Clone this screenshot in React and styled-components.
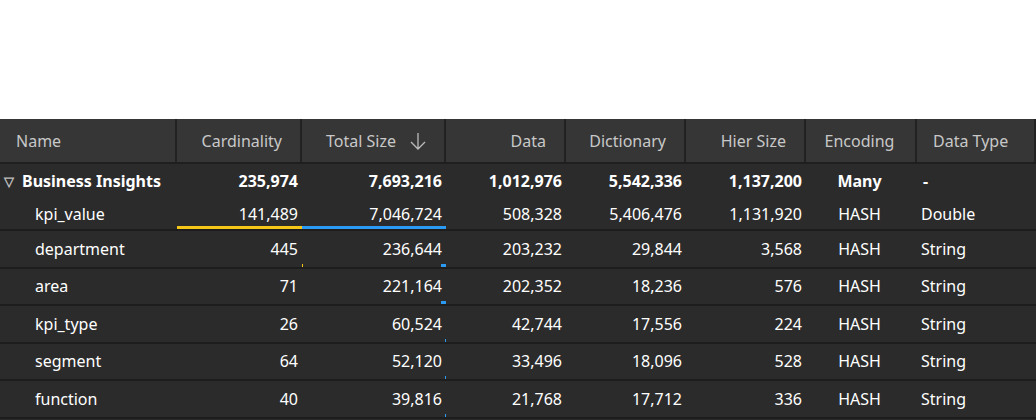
import React from 'react';
import styled, { createGlobalStyle } from 'styled-components';

const Global = createGlobalStyle`
  body { margin: 0; background: #fff; font-family: "Noto Sans", "Open Sans", sans-serif; }
`;

const cols = [
  { key: 'name', label: 'Name', w: 177, align: 'left' },
  { key: 'card', label: 'Cardinality', w: 125, align: 'right', bar: '#f5c518' },
  { key: 'total', label: 'Total Size', w: 144, align: 'right', bar: '#2b9af3', sort: true },
  { key: 'data', label: 'Data', w: 120, align: 'right' },
  { key: 'dict', label: 'Dictionary', w: 120, align: 'right' },
  { key: 'hier', label: 'Hier Size', w: 120, align: 'right' },
  { key: 'enc', label: 'Encoding', w: 111, align: 'center' },
  { key: 'type', label: 'Data Type', w: 119, align: 'left' },
];

const rows = [
  ['kpi_value', 141489, 7046724, '508,328', '5,406,476', '1,131,920', 'HASH', 'Double'],
  ['department', 445, 236644, '203,232', '29,844', '3,568', 'HASH', 'String'],
  ['area', 71, 221164, '202,352', '18,236', '576', 'HASH', 'String'],
  ['kpi_type', 26, 60524, '42,744', '17,556', '224', 'HASH', 'String'],
  ['segment', 64, 52120, '33,496', '18,096', '528', 'HASH', 'String'],
  ['function', 40, 39816, '21,768', '17,712', '336', 'HASH', 'String'],
];

const Page = styled.div`
  padding-top: 119px;
  height: 420px;
  box-sizing: border-box;
  overflow: hidden;
`;

const Table = styled.div`
  background: #2b2b2b;
  width: 1036px;
  height: 301px;
`;

const HeaderRow = styled.div`
  display: flex;
  height: 43px;
  background: #363636;
  border-bottom: 2px solid #1f1f1f;
`;

const HeadCell = styled.div`
  width: ${p => p.w}px;
  box-sizing: border-box;
  border-right: 2px solid #222;
  display: flex;
  align-items: center;
  justify-content: ${p => (p.align === 'left' ? 'flex-start' : p.align === 'center' ? 'center' : 'flex-end')};
  padding: 0 18px 0 16px;
  color: #c8c8c8;
  font-size: 16px;
  gap: 14px;
`;

const Row = styled.div`
  display: flex;
  height: ${p => p.h}px;
  border-bottom: ${p => (p.sep ? '2px solid #1d1d1d' : 'none')};
  color: #fff;
  font-size: 16px;
  font-weight: ${p => (p.bold ? 700 : 400)};
`;

const Cell = styled.div`
  position: relative;
  width: ${p => p.w}px;
  box-sizing: border-box;
  display: flex;
  align-items: center;
  justify-content: ${p => (p.align === 'left' ? 'flex-start' : p.align === 'center' ? 'center' : 'flex-end')};
  padding: ${p => (p.align === 'left' ? '0 0 0 ' + p.indent + 'px' : '0 4px 0 0')};
  white-space: nowrap;
`;

const Bar = styled.div`
  position: absolute;
  right: 0;
  bottom: 0;
  height: 3px;
  background: ${p => p.color};
`;

const Caret = styled.span`
  color: #bbb;
  font-size: 13px;
  margin-right: 8px;
`;

const fmt = n => n.toLocaleString('en-US');

export default function App() {
  const maxC = 141489;
  const maxT = 7046724;
  return (
    <Page>
      <Global />
      <Table>
        <HeaderRow>
          {cols.map(c => (
            <HeadCell key={c.key} w={c.w} align={c.align}>
              {c.label}
              {c.sort && (
                <svg width="16" height="18" viewBox="0 0 16 18" fill="none" stroke="#bbb" strokeWidth="1.3">
                  <path d="M8 1v16M1 10l7 7 7-7" />
                </svg>
              )}
            </HeadCell>
          ))}
        </HeaderRow>
        <Row h={34} bold>
          <Cell w={177} align="left" indent={4}><Caret>▽</Caret>Business Insights</Cell>
          <Cell w={125}>235,974</Cell>
          <Cell w={144}>7,693,216</Cell>
          <Cell w={120}>1,012,976</Cell>
          <Cell w={120}>5,542,336</Cell>
          <Cell w={120}>1,137,200</Cell>
          <Cell w={111} align="center">Many</Cell>
          <Cell w={119} align="left" indent={6}>-</Cell>
        </Row>
        {rows.map((r, i) => (
          <Row key={r[0]} h={i === 0 ? 31 : 35.5} sep>
            <Cell w={177} align="left" indent={35}>{r[0]}</Cell>
            <Cell w={125}>
              {fmt(r[1])}
              <Bar color="#f5c518" style={{ width: `${Math.max(0, (r[1] / maxC) * 125)}px` }} />
            </Cell>
            <Cell w={144}>
              {fmt(r[2])}
              <Bar color="#2b9af3" style={{ width: `${(r[2] / maxT) * 144}px` }} />
            </Cell>
            <Cell w={120}>{r[3]}</Cell>
            <Cell w={120}>{r[4]}</Cell>
            <Cell w={120}>{r[5]}</Cell>
            <Cell w={111} align="center">{r[6]}</Cell>
            <Cell w={119} align="left" indent={4}>{r[7]}</Cell>
          </Row>
        ))}
      </Table>
    </Page>
  );
}
